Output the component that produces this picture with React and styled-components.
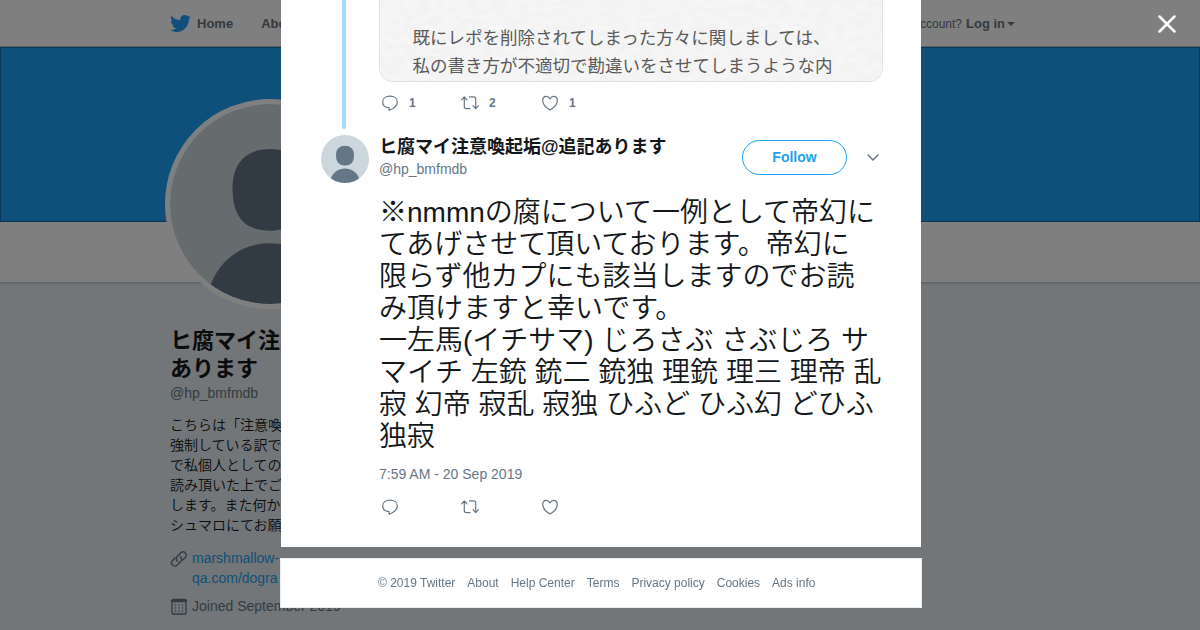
import React from 'react';
import styled, { createGlobalStyle } from 'styled-components';
import { FaTwitter } from 'react-icons/fa';

const GlobalStyle = createGlobalStyle`
  * {
    box-sizing: border-box;
  }

  body {
    margin: 0;
    background: #e6ecf0;
    color: #14171a;
    font-family: "Liberation Sans", "Noto Sans CJK JP", sans-serif;
    font-size: 14px;
    line-height: 20px;
    overflow: hidden;
  }

  h1, h2, p {
    margin: 0;
  }

  a {
    color: inherit;
    text-decoration: none;
  }

  svg {
    display: block;
    flex-shrink: 0;
  }
`;

const Container = styled.div`
  max-width: 860px;
  margin: 0 auto;
`;

/* top bar */

const TopBar = styled.header`
  height: 47px;
  background: #fff;
  border-bottom: 1px solid rgba(0, 0, 0, 0.25);
  color: #66757f;
  font-size: 13px;
`;

const TopBarInner = styled(Container)`
  display: flex;
  align-items: center;
  height: 47px;
  padding-right: 15px;
`;

const NavLink = styled.a`
  display: flex;
  align-items: center;
  gap: 6px;
  margin-right: 28px;
  font-weight: bold;
`;

const LoginText = styled.span`
  margin-left: auto;
  margin-right: 4px;
  font-size: 12px;
`;

const LoginButton = styled.button`
  display: flex;
  align-items: center;
  gap: 2px;
  padding: 0;
  border: 0;
  background: none;
  color: inherit;
  font: bold 13px "Liberation Sans", sans-serif;
`;

const Caret = styled.span`
  border: 4px solid transparent;
  border-top-color: currentColor;
  border-bottom: 0;
`;

/* profile */

const Banner = styled.div`
  height: 175px;
  background: #1da1f2;
  border: 1px solid rgba(0, 0, 0, 0.25);
`;

const ProfileNav = styled.div`
  height: 60px;
  background: #fff;
  box-shadow: 0 1px 3px rgba(0, 0, 0, 0.25);
`;

const ProfileAvatar = styled.div`
  position: relative;
  width: 210px;
  height: 210px;
  margin: -183px 0 0 -5px;
  border: 5px solid #fff;
  border-radius: 50%;
  background: #fff;
  overflow: hidden;

  svg {
    border-radius: 50%;
  }
`;

const Sidebar = styled.aside`
  width: 270px;
  padding-top: 18px;
`;

const ProfileName = styled.h1`
  font-size: 22px;
  line-height: 28px;
`;

const Handle = styled.p`
  color: #657786;
`;

const Bio = styled.p`
  margin: 12px 0 13px;
  font-weight: 350;
  white-space: pre-line;
`;

const Detail = styled.div`
  display: flex;
  gap: 4px;
  margin: 8px 0;
  color: #657786;

  a {
    color: #1da1f2;
  }

  svg {
    margin-top: 2px;
  }
`;

/* overlay */

const Overlay = styled.div`
  position: fixed;
  inset: 0;
  padding-left: 2px;
  background: rgba(0, 0, 0, 0.5);
  overflow: hidden;
`;

const CloseButton = styled.button`
  position: absolute;
  top: 11px;
  right: 20px;
  padding: 3px;
  border: 0;
  background: none;
  color: #fff;
`;

const Modal = styled.main`
  max-width: 640px;
  margin: 0 auto;
  padding: 0 38px 29px 40px;
  background: #fff;
`;

const Tweet = styled.article`
  display: grid;
  grid-template-columns: 48px 1fr;
  column-gap: 10px;
`;

const ThreadLine = styled.div`
  width: 4px;
  height: 129px;
  margin-left: 21px;
  border-radius: 0 0 2px 2px;
  background: #a3d9f9;
`;

const Photo = styled.div`
  height: 82px;
  border: 1px solid #dfe3e6;
  border-top: 0;
  border-radius: 0 0 14px 14px;
  overflow: hidden;
`;

const ActionRow = styled.div`
  display: flex;
  margin-top: ${(props) => props.$top}px;
`;

const ActionButton = styled.button`
  display: flex;
  align-items: center;
  gap: 8px;
  width: 80px;
  height: 22px;
  padding: 0;
  border: 0;
  background: none;
  color: #657786;
  font: bold 12px "Liberation Sans", sans-serif;
`;

const SmallAvatar = styled.div`
  width: 48px;
  height: 48px;
  margin-top: 6px;
  border-radius: 50%;
  overflow: hidden;
`;

const Author = styled.div`
  display: flex;
  align-items: center;
  height: 56px;
`;

const AuthorName = styled.h2`
  font-size: 18px;
  line-height: 24px;
`;

const FollowButton = styled.button`
  width: 105px;
  height: 35px;
  margin-left: auto;
  border: 1px solid #1da1f2;
  border-radius: 100px;
  background: #fff;
  color: #1da1f2;
  font: bold 14px "Liberation Sans", sans-serif;
`;

const MenuButton = styled.button`
  margin-left: 16px;
  padding: 3px;
  border: 0;
  background: none;
  color: #657786;
`;

const TweetBody = styled.div`
  grid-column: 2;
`;

const TweetText = styled.p`
  margin: 12px 0 11px;
  font-size: 28px;
  font-weight: 350;
  line-height: 32px;
  white-space: pre;
`;

const Footer = styled.footer`
  display: flex;
  align-items: center;
  gap: 12px;
  max-width: 642px;
  height: 50px;
  margin: 11px auto 0;
  padding-left: 97px;
  border: 1px solid #e6ecf0;
  background: #fff;
  color: #657786;
  font-size: 12px;
`;

const bio = `こちらは「注意喚
強制している訳で
で私個人としての
読み頂いた上でご
します。また何か
シュマロにてお願`;

const tweetText = `※nmmnの腐について一例として帝幻に
てあげさせて頂いております。帝幻に
限らず他カプにも該当しますのでお読
み頂けますと幸いです。
一左馬(イチサマ) じろさぶ さぶじろ サ
マイチ 左銃 銃二 銃独 理銃 理三 理帝 乱
寂 幻帝 寂乱 寂独 ひふど ひふ幻 どひふ
独寂`;

const name = 'ヒ腐マイ注意喚起垢@追記あります';
const footerLinks = ['About', 'Help Center', 'Terms', 'Privacy policy', 'Cookies', 'Ads info'];

function Avatar() {
  return (
    <svg viewBox="0 0 48 48" width="100%" height="100%">
      <rect width="48" height="48" fill="#ccd6dd" />
      <path d="M24 10.800c-5.600 0-9 3.400-9 9.200 0 6.600 2.400 10.400 9 10.400s9-3.800 9-10.400c0-5.800-3.400-9.200-9-9.200z" fill="#657786" />
      <path d="M9 46c1.600-7.600 7.500-12.600 15-12.600S37.400 38.400 39 46v2H9z" fill="#657786" />
    </svg>
  );
}

const line = { fill: 'none', stroke: 'currentColor', strokeLinecap: 'round', strokeLinejoin: 'round' };

function ReplyIcon() {
  return (
    <svg width="22" height="22" viewBox="0 0 22 22" {...line} strokeWidth="1.2">
      <path d="M10 15.600C6.300 15.400 3.700 13.200 3.700 9.900c0-3.400 3-5.700 7.300-5.700s7.300 2.300 7.300 5.700c0 4-4 6.700-8.100 8.400-.2-.8-.2-1.700-.2-2.700z" />
    </svg>
  );
}

function RetweetIcon() {
  return (
    <svg width="22" height="22" viewBox="0 0 22 22" {...line} strokeWidth="1.2">
      <path d="M2.600 7.800 5.300 4.900 8 7.800M5.300 5v9.600c0 1.200.8 2 2 2H11M10.500 4.900h4.200c1.200 0 2 .8 2 2v9.600M14 13.700l2.700 2.900 2.700-2.900" />
    </svg>
  );
}

function HeartIcon() {
  return (
    <svg width="22" height="22" viewBox="0 0 22 22" {...line} strokeWidth="1.2">
      <path d="M11 18C7.500 16 3.700 12.500 3.700 8.500c0-2.500 1.700-4.100 3.700-4.100 1.600 0 2.900.9 3.600 2.500.7-1.600 2-2.500 3.600-2.500 2 0 3.700 1.600 3.700 4.100 0 4-3.800 7.500-7.300 9.500z" />
    </svg>
  );
}

function LinkIcon() {
  return (
    <svg width="18" height="18" viewBox="0 0 18 18" {...line} strokeWidth="1.4">
      <path d="M7.500 11.300C5.800 9.800 5.900 7.700 7.300 6.300l3.200-3.200c1.500-1.500 3.500-1.500 4.800-.2s1.300 3.300-.2 4.800l-2.300 2.300" />
      <path d="M10.300 6.700c1.700 1.500 1.600 3.600.2 5l-3.200 3.200c-1.500 1.500-3.500 1.500-4.800.2s-1.300-3.300.2-4.800L5 8" />
    </svg>
  );
}

function CalendarIcon() {
  return (
    <svg width="18" height="18" viewBox="0 0 18 18" {...line} strokeWidth="1.3">
      <rect x="2" y="1.500" width="14" height="14.500" rx="1" />
      <path d="M2 3h14" strokeWidth="2.5" />
      <path d="M5.500 7h.1M9 7h.1M12.500 7h.1M5.500 10h.1M9 10h.1M12.500 10h.1M5.500 13h.1M9 13h.1M12.500 13h.1" strokeWidth="1.4" />
    </svg>
  );
}

// scanned note, drawn at double size and scaled to its frame
function NotePhoto() {
  return (
    <svg viewBox="0 0 1004 162" width="100%" height="81" preserveAspectRatio="xMinYMin slice" role="img">
      <filter id="paper">
        <feTurbulence type="fractalNoise" baseFrequency="0.04 0.08" numOctaves="3" seed="4" />
        <feColorMatrix values="0 0 0 0 0.5  0 0 0 0 0.5  0 0 0 0 0.5  0.16 0 0 0 -0.05" />
      </filter>
      <rect width="1004" height="162" fill="#f6f6f6" />
      <rect width="1004" height="162" filter="url(#paper)" />
      <g fill="#5a5a5a" fontSize="35" fontFamily="Noto Sans CJK JP, sans-serif">
        <text x="65" y="87">既にレポを削除されてしまった方々に関しましては、</text>
        <text x="65" y="143">私の書き方が不適切で勘違いをさせてしまうような内</text>
      </g>
    </svg>
  );
}

function Actions({ counts = [], top }) {
  return (
    <ActionRow $top={top}>
      <ActionButton aria-label="Reply"><ReplyIcon />{counts[0]}</ActionButton>
      <ActionButton aria-label="Retweet"><RetweetIcon />{counts[1]}</ActionButton>
      <ActionButton aria-label="Like"><HeartIcon />{counts[2]}</ActionButton>
    </ActionRow>
  );
}

function App() {
  return (
    <>
      <GlobalStyle />
      <TopBar>
        <TopBarInner>
          <NavLink href="#home"><FaTwitter size={21} color="#1da1f2" />Home</NavLink>
          <NavLink href="#about">About</NavLink>
          <LoginText>Have an account?</LoginText>
          <LoginButton>Log in<Caret /></LoginButton>
        </TopBarInner>
      </TopBar>
      <Banner />
      <ProfileNav />
      <Container>
        <ProfileAvatar><Avatar /></ProfileAvatar>
        <Sidebar>
          <ProfileName>{name}</ProfileName>
          <Handle>@hp_bmfmdb</Handle>
          <Bio>{bio}</Bio>
          <Detail><LinkIcon /><a href="#site">marshmallow-<br />qa.com/dogra</a></Detail>
          <Detail><CalendarIcon />Joined September 2019</Detail>
        </Sidebar>
      </Container>

      <Overlay>
        <Modal>
          <Tweet>
            <ThreadLine />
            <div>
              <Photo><NotePhoto /></Photo>
              <Actions counts={[1, 2, 1]} top={10} />
            </div>
          </Tweet>
          <Tweet>
            <SmallAvatar><Avatar /></SmallAvatar>
            <Author>
              <div>
                <AuthorName>{name}</AuthorName>
                <Handle>@hp_bmfmdb</Handle>
              </div>
              <FollowButton>Follow</FollowButton>
              <MenuButton aria-label="More">
                <svg width="14" height="14" viewBox="0 0 14 14" {...line} strokeWidth="1.5">
                  <path d="M2 5l5 5 5-5" />
                </svg>
              </MenuButton>
            </Author>
            <TweetBody>
              <TweetText>{tweetText}</TweetText>
              <Handle>7:59 AM - 20 Sep 2019</Handle>
              <Actions top={12} />
            </TweetBody>
          </Tweet>
        </Modal>
        <Footer>
          <span>© 2019 Twitter</span>
          {footerLinks.map((item) => (
            <a key={item} href="#footer">{item}</a>
          ))}
        </Footer>
        <CloseButton aria-label="Close">
          <svg width="20" height="20" viewBox="0 0 20 20" {...line} strokeWidth="2.5">
            <path d="M2.500 2.500l15 15M17.500 2.500l-15 15" />
          </svg>
        </CloseButton>
      </Overlay>
    </>
  );
}

export default App;
